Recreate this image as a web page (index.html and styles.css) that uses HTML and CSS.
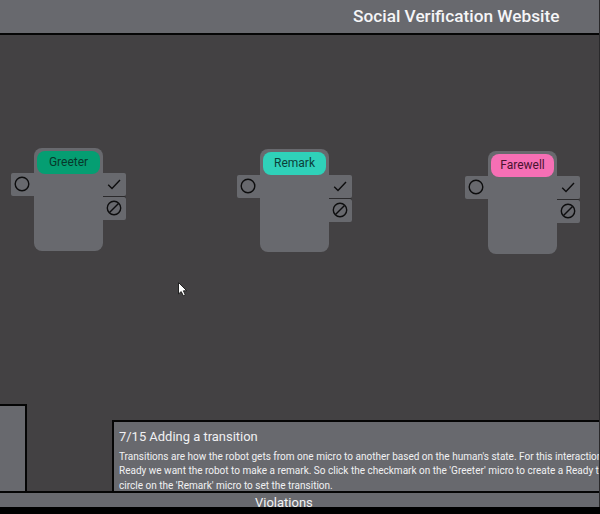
FILE: index.html
```html
<!DOCTYPE html>
<html lang="en">
<head>
<meta charset="utf-8">
<title>Social Verification Website</title>
<link rel="stylesheet" href="styles.css">
</head>
<body>
<svg class="defs" aria-hidden="true">
  <symbol id="circle" viewBox="0 0 18 18"><circle cx="9" cy="9" r="6.8"/></symbol>
  <symbol id="check" viewBox="0 0 18 18"><path d="M3.2 9.7 7 13.4 15 4.9"/></symbol>
  <symbol id="ban" viewBox="0 0 18 18"><circle cx="9" cy="9" r="6.7"/><path d="M4.5 13.5 13.5 4.5"/></symbol>
</svg>
<div class="app">
  <header class="header"><h1>Social Verification Website</h1></header>
  <main class="workspace">
    <section class="micro greeter">
      <div class="ports"><span class="port in"><svg><use href="#circle"/></svg></span></div>
      <div class="body"><div class="name">Greeter</div></div>
      <div class="ports"><span class="port"><svg><use href="#check"/></svg></span><span class="port"><svg><use href="#ban"/></svg></span></div>
    </section>
    <section class="micro remark">
      <div class="ports"><span class="port in"><svg><use href="#circle"/></svg></span></div>
      <div class="body"><div class="name">Remark</div></div>
      <div class="ports"><span class="port"><svg><use href="#check"/></svg></span><span class="port"><svg><use href="#ban"/></svg></span></div>
    </section>
    <section class="micro farewell">
      <div class="ports"><span class="port in"><svg><use href="#circle"/></svg></span></div>
      <div class="body"><div class="name">Farewell</div></div>
      <div class="ports"><span class="port"><svg><use href="#check"/></svg></span><span class="port"><svg><use href="#ban"/></svg></span></div>
    </section>
    <svg class="cursor" viewBox="0 0 12 17"><path d="M1.5 1.5V13L4.2 10.6 6.3 14.8 8.3 13.8 6.4 9.8H9.8Z"/></svg>
    <aside class="side"></aside>
    <article class="tutorial">
      <h2>7/15 Adding a transition</h2>
      <p>Transitions are how the robot gets from one micro to another based on the human's state. For this interaction<br>Ready we want the robot to make a remark. So click the checkmark on the 'Greeter' micro to create a Ready t<br>circle on the 'Remark' micro to set the transition.</p>
    </article>
  </main>
  <footer class="violations">Violations</footer>
</div>
</body>
</html>
```
FILE: styles.css
```css
* { box-sizing: border-box; }
body { margin: 0; background: #000; font-family: Roboto, "Liberation Sans", sans-serif; }
.defs { position: absolute; width: 0; height: 0; }
.app { display: flex; flex-direction: column; height: 507px; width: 600px; overflow: hidden; border-right: 1px solid #29282a; }
.header { flex: none; height: 35px; background: #68696e; border-bottom: 2px solid #050505; padding: 6px 0 0 353px; }
h1 { margin: 0; font-size: 17.25px; line-height: 20px; font-weight: 500; color: #f5f5f7; white-space: nowrap; }
.workspace { position: relative; flex: 1; min-height: 0; background: #434143; display: flex; align-items: flex-end; overflow: hidden; }
.micro { position: absolute; display: flex; }
.greeter { left: 10.5px; top: 112.7px; --chip: #059e72; --ink: #07382b; }
.remark { left: 236.5px; top: 114px; --chip: #2fd1b9; --ink: #0b4039; }
.farewell { left: 464.5px; top: 115.5px; --chip: #f66fb5; --ink: #49132f; }
.body { width: 69px; height: 103px; padding: 3px; border-radius: 8px; background: #68696e; }
.name { height: 23px; border-radius: 8px; background: var(--chip); color: var(--ink); font-size: 12px; line-height: 22px; padding-left: 1px; text-align: center; }
.ports { display: flex; flex-direction: column; gap: 1px; padding-top: 25.8px; }
.port { width: 23px; height: 23px; border-radius: 0 2px 2px 0; background: #68696e; display: grid; place-items: center; }
.port + .port { box-shadow: 0 -1px #2b2a2c; }
.port.in { border-radius: 2px 0 0 2px; }
.port svg { width: 18px; height: 18px; margin-top: -1px; fill: none; stroke: #0d0d0e; stroke-width: 1.4; }
.cursor { position: absolute; left: 177px; top: 245.5px; width: 12px; height: 17px; fill: #fff; stroke: #222; stroke-width: 1; }
.side { flex: none; width: 27px; height: 87px; background: #68696e; border: 2px solid #050505; border-left: 0; border-bottom: 0; }
.tutorial { flex: none; width: 510px; height: 71px; margin-left: 85px; padding: 6px 5px 0; background: #68696e; border: 2px solid #050505; border-right: 0; border-bottom: 0; color: #f1f1f3; white-space: nowrap; }
h2 { margin: 0 0 4px; font-size: 12.95px; line-height: 18px; font-weight: 400; }
p { margin: 0; font-size: 10.03px; line-height: 14.4px; }
.violations { flex: none; height: 16px; background: #68696e; border-top: 2px solid #050505; color: #f1f1f3; font-size: 13px; line-height: 19px; padding-left: 255px; overflow: hidden; }
```
